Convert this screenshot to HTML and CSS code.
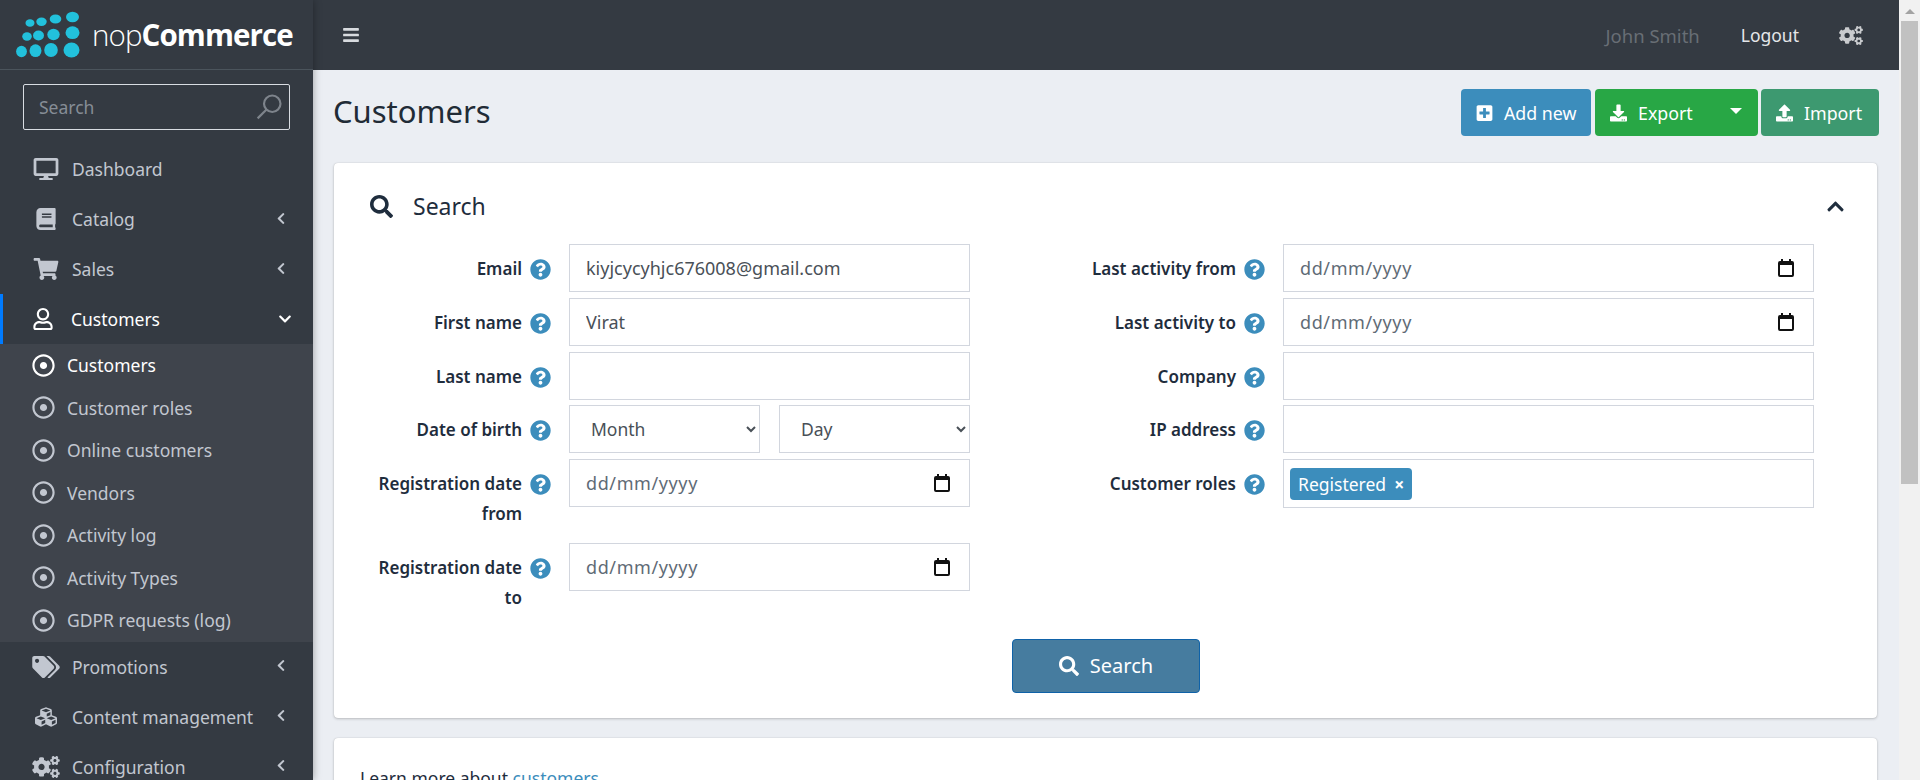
FILE: index.html
```html
<!DOCTYPE html>
<html lang="en">
<head>
	<title>Customers / nopCommerce administration</title>
	<meta charset="utf-8">
	<link rel="stylesheet" href="styles.css">
</head>
<body>
<svg class="sprites" xmlns="http://www.w3.org/2000/svg">
	<symbol id="i-search" viewBox="0 0 512 512"><path d="M505 442.7L405.3 343c-4.5-4.5-10.6-7-17-7H372c27.6-35.3 44-79.7 44-128C416 93.1 322.9 0 208 0S0 93.1 0 208s93.1 208 208 208c48.3 0 92.7-16.4 128-44v16.3c0 6.4 2.5 12.5 7 17l99.7 99.7c9.4 9.4 24.6 9.4 33.9 0l28.3-28.3c9.4-9.4 9.4-24.6.1-34zM208 336c-70.7 0-128-57.2-128-128 0-70.7 57.2-128 128-128 70.7 0 128 57.2 128 128 0 70.7-57.2 128-128 128z"/></symbol>
	<symbol id="i-bars" viewBox="0 0 448 512"><path d="M16 132h416c8.837 0 16-7.163 16-16V76c0-8.837-7.163-16-16-16H16C7.163 60 0 67.163 0 76v40c0 8.837 7.163 16 16 16zm0 160h416c8.837 0 16-7.163 16-16v-40c0-8.837-7.163-16-16-16H16c-8.837 0-16 7.163-16 16v40c0 8.837 7.163 16 16 16zm0 160h416c8.837 0 16-7.163 16-16v-40c0-8.837-7.163-16-16-16H16c-8.837 0-16 7.163-16 16v40c0 8.837 7.163 16 16 16z"/></symbol>
	<symbol id="i-help" viewBox="0 0 512 512"><path d="M504 256c0 136.997-111.043 248-248 248S8 392.997 8 256C8 119.083 119.043 8 256 8s248 111.083 248 248zM262.655 90c-54.497 0-89.255 22.957-116.549 63.758-3.536 5.286-2.353 12.415 2.715 16.258l34.699 26.31c5.205 3.947 12.621 3.008 16.665-2.122 17.864-22.658 30.113-35.797 57.303-35.797 20.429 0 45.698 13.148 45.698 32.958 0 14.976-12.363 22.667-32.534 33.976C247.128 238.528 216 254.941 216 296v4c0 6.627 5.373 12 12 12h56c6.627 0 12-5.373 12-12v-1.333c0-28.462 83.186-29.647 83.186-106.667 0-58.002-60.165-102-116.531-102zM256 338c-25.365 0-46 20.635-46 46 0 25.364 20.635 46 46 46s46-20.636 46-46c0-25.365-20.635-46-46-46z"/></symbol>
	<symbol id="i-left" viewBox="0 0 320 512"><path d="M34.52 239.03L228.87 44.69c9.37-9.37 24.57-9.37 33.94 0l22.67 22.67c9.36 9.36 9.37 24.52.04 33.9L131.49 256l154.02 154.75c9.34 9.38 9.32 24.54-.04 33.9l-22.67 22.67c-9.37 9.37-24.57 9.37-33.94 0L34.52 272.97c-9.37-9.37-9.37-24.57 0-33.94z"/></symbol>
	<symbol id="i-down" viewBox="0 0 448 512"><path d="M207.029 381.476L12.686 187.132c-9.373-9.373-9.373-24.569 0-33.941l22.667-22.667c9.357-9.357 24.522-9.375 33.901-.04L224 284.505l154.745-154.021c9.379-9.335 24.544-9.317 33.901.04l22.667 22.667c9.373 9.373 9.373 24.569 0 33.941L240.971 381.476c-9.373 9.372-24.569 9.372-33.942 0z"/></symbol>
	<symbol id="i-up" viewBox="0 0 448 512"><path d="M240.971 130.524l194.343 194.343c9.373 9.373 9.373 24.569 0 33.941l-22.667 22.667c-9.357 9.357-24.522 9.375-33.901.04L224 227.495 69.255 381.516c-9.379 9.335-24.544 9.317-33.901-.04l-22.667-22.667c-9.373-9.373-9.373-24.569 0-33.941L207.03 130.525c9.372-9.373 24.568-9.373 33.941-.001z"/></symbol>
	<symbol id="i-desktop" viewBox="0 0 576 512"><path d="M528 0H48C21.5 0 0 21.5 0 48v320c0 26.5 21.5 48 48 48h192l-16 48h-72c-13.3 0-24 10.7-24 24s10.7 24 24 24h272c13.3 0 24-10.7 24-24s-10.7-24-24-24h-72l-16-48h192c26.5 0 48-21.5 48-48V48c0-26.5-21.5-48-48-48zm-16 352H64V64h448v288z"/></symbol>
	<symbol id="i-book" viewBox="0 0 448 512"><path d="M448 360V24c0-13.3-10.7-24-24-24H96C43 0 0 43 0 96v320c0 53 43 96 96 96h328c13.3 0 24-10.7 24-24v-16c0-7.5-3.5-14.3-8.9-18.7-4.2-15.4-4.2-59.3 0-74.7 5.4-4.3 8.9-11.1 8.9-18.6zM128 134c0-3.3 2.7-6 6-6h212c3.3 0 6 2.7 6 6v20c0 3.3-2.7 6-6 6H134c-3.3 0-6-2.7-6-6v-20zm0 64c0-3.3 2.7-6 6-6h212c3.3 0 6 2.7 6 6v20c0 3.3-2.7 6-6 6H134c-3.3 0-6-2.7-6-6v-20zm253.4 250H96c-17.7 0-32-14.3-32-32 0-17.6 14.4-32 32-32h285.4c-1.9 17.1-1.9 46.9 0 64z"/></symbol>
	<symbol id="i-cart" viewBox="0 0 576 512"><path d="M528.12 301.319l47.273-208C578.806 78.301 567.391 64 551.99 64H159.208l-9.166-44.81C147.758 8.021 137.93 0 126.529 0H24C10.745 0 0 10.745 0 24v16c0 13.255 10.745 24 24 24h69.883l70.248 343.435C147.325 417.1 136 435.222 136 456c0 30.928 25.072 56 56 56s56-25.072 56-56c0-15.674-6.447-29.835-16.824-40h209.647C430.447 426.165 424 440.326 424 456c0 30.928 25.072 56 56 56s56-25.072 56-56c0-22.172-12.888-41.332-31.579-50.405l5.517-24.276c3.413-15.018-8.002-29.319-23.403-29.319H218.117l-6.545-32h293.145c11.206 0 20.92-7.754 23.403-18.681z"/></symbol>
	<symbol id="i-user" viewBox="0 0 448 512"><path d="M313.6 304c-28.7 0-42.5 16-89.6 16-47.1 0-60.8-16-89.6-16C60.2 304 0 364.2 0 438.4V464c0 26.5 21.5 48 48 48h352c26.5 0 48-21.5 48-48v-25.6c0-74.2-60.2-134.4-134.4-134.4zM400 464H48v-25.6c0-47.6 38.8-86.4 86.4-86.4 14.6 0 38.3 16 89.6 16 51.7 0 74.9-16 89.6-16 47.6 0 86.4 38.8 86.4 86.4V464zM224 288c79.5 0 144-64.5 144-144S303.5 0 224 0 80 64.5 80 144s64.5 144 144 144zm0-240c52.9 0 96 43.1 96 96s-43.1 96-96 96-96-43.1-96-96 43.1-96 96-96z"/></symbol>
	<symbol id="i-dot" viewBox="0 0 512 512"><path d="M256 56c110.532 0 200 89.451 200 200 0 110.532-89.451 200-200 200-110.532 0-200-89.451-200-200 0-110.532 89.451-200 200-200m0-48C119.033 8 8 119.033 8 256s111.033 248 248 248 248-111.033 248-248S392.967 8 256 8zm0 168c-44.183 0-80 35.817-80 80s35.817 80 80 80 80-35.817 80-80-35.817-80-80-80z"/></symbol>
	<symbol id="i-tags" viewBox="0 0 640 512"><path d="M497.941 225.941L286.059 14.059A48 48 0 0 0 252.118 0H48C21.49 0 0 21.49 0 48v204.118a48 48 0 0 0 14.059 33.941l211.882 211.882c18.744 18.745 49.136 18.746 67.882 0l204.118-204.118c18.745-18.745 18.745-49.137 0-67.882zM112 160c-26.51 0-48-21.49-48-48s21.49-48 48-48 48 21.49 48 48-21.49 48-48 48zm513.941 133.823L421.823 497.941c-18.745 18.745-49.137 18.745-67.882 0l-.36-.36L527.64 323.522c16.999-16.999 26.36-39.6 26.36-63.64s-9.362-46.641-26.36-63.64L331.397 0h48.721a48 48 0 0 1 33.941 14.059l211.882 211.882c18.745 18.745 18.745 49.137 0 67.882z"/></symbol>
	<symbol id="i-cubes" viewBox="0 0 512 512"><path d="M488.6 250.2L392 214V105.5c0-15-9.3-28.4-23.4-33.7l-100-37.5c-8.1-3.1-17.1-3.1-25.3 0l-100 37.5c-14.1 5.3-23.4 18.7-23.4 33.7V214l-96.6 36.2C9.3 255.5 0 268.9 0 283.9V394c0 13.6 7.7 26.1 19.9 32.2l100 50c10.1 5.1 22.1 5.1 32.2 0l103.9-52 103.9 52c10.1 5.1 22.1 5.1 32.2 0l100-50c12.2-6.1 19.9-18.6 19.9-32.2V283.9c0-15-9.3-28.4-23.4-33.7zM358 214.8l-85 31.9v-68.2l85-37v73.3zM154 104.1l102-38.2 102 38.2v.6l-102 41.4-102-41.4v-.6zm84 291.1l-85 42.5v-79.1l85-38.8v75.4zm0-112l-102 41.4-102-41.4v-.6l102-38.2 102 38.2v.6zm240 112l-85 42.5v-79.1l85-38.8v75.4zm0-112l-102 41.4-102-41.4v-.6l102-38.2 102 38.2v.6z"/></symbol>
	<symbol id="i-cogs" viewBox="0 0 640 512"><path d="M512.1 191l-8.2 14.3c-3 5.3-9.4 7.5-15.1 5.4-11.8-4.4-22.6-10.7-32.1-18.6-4.6-3.8-5.8-10.5-2.8-15.7l8.2-14.3c-6.9-8-12.3-17.3-15.9-27.4h-16.5c-6 0-11.2-4.3-12.2-10.3-2-12-2.1-24.6 0-37.1 1-6 6.2-10.4 12.2-10.4h16.5c3.6-10.1 9-19.4 15.9-27.4l-8.2-14.3c-3-5.2-1.9-11.9 2.8-15.7 9.5-7.9 20.4-14.2 32.1-18.6 5.7-2.1 12.1.1 15.1 5.4l8.2 14.3c10.5-1.9 21.2-1.9 31.7 0L552 6.3c3-5.3 9.4-7.5 15.1-5.4 11.8 4.4 22.6 10.7 32.1 18.6 4.6 3.8 5.8 10.5 2.8 15.7l-8.2 14.3c6.9 8 12.3 17.3 15.9 27.4h16.5c6 0 11.2 4.3 12.2 10.3 2 12 2.1 24.6 0 37.1-1 6-6.2 10.4-12.2 10.4h-16.5c-3.6 10.1-9 19.4-15.9 27.4l8.2 14.3c3 5.2 1.9 11.9-2.8 15.7-9.5 7.9-20.4 14.2-32.1 18.6-5.7 2.1-12.1-.1-15.1-5.4l-8.2-14.3c-10.4 1.9-21.2 1.9-31.7 0zm-10.5-58.8c38.5 29.6 82.4-14.3 52.8-52.8-38.5-29.7-82.4 14.3-52.8 52.8zM386.3 286.1l33.7 16.8c10.1 5.8 14.5 18.1 10.5 29.1-8.9 24.2-26.4 46.4-42.6 65.8-7.4 8.9-20.2 11.1-30.3 5.3l-29.1-16.8c-16 13.7-34.6 24.6-54.9 31.7v33.6c0 11.6-8.3 21.6-19.7 23.6-24.6 4.2-50.4 4.4-75.9 0-11.5-2-20-11.9-20-23.6V418c-20.3-7.2-38.9-18-54.9-31.7L74 403c-10 5.8-22.9 3.6-30.3-5.3-16.2-19.4-33.3-41.6-42.2-65.7-4-10.9.4-23.2 10.5-29.1l33.3-16.8c-3.9-20.9-3.9-42.4 0-63.4L12 205.8c-10.1-5.8-14.6-18.1-10.5-29 8.9-24.2 26-46.4 42.2-65.8 7.4-8.9 20.2-11.1 30.3-5.3l29.1 16.8c16-13.7 34.6-24.6 54.9-31.7V57.1c0-11.5 8.2-21.5 19.6-23.5 24.6-4.2 50.5-4.4 76-.1 11.5 2 20 11.9 20 23.6v33.6c20.3 7.2 38.9 18 54.9 31.7l29.1-16.8c10-5.8 22.9-3.6 30.3 5.3 16.2 19.4 33.2 41.6 42.1 65.8 4 10.9.1 23.2-10 29.1l-33.7 16.8c3.9 21 3.9 42.5 0 63.5zm-117.6 21.1c59.2-77-28.7-164.9-105.7-105.7-59.2 77 28.7 164.9 105.7 105.7zm243.4 182.7l-8.2 14.3c-3 5.3-9.4 7.5-15.1 5.4-11.8-4.4-22.6-10.7-32.1-18.6-4.6-3.8-5.8-10.5-2.8-15.7l8.2-14.3c-6.9-8-12.3-17.3-15.9-27.4h-16.5c-6 0-11.2-4.3-12.2-10.3-2-12-2.1-24.6 0-37.1 1-6 6.2-10.4 12.2-10.4h16.5c3.6-10.1 9-19.4 15.9-27.4l-8.2-14.3c-3-5.2-1.9-11.9 2.8-15.7 9.5-7.9 20.4-14.2 32.1-18.6 5.7-2.1 12.1.1 15.1 5.4l8.2 14.3c10.5-1.9 21.2-1.9 31.7 0l8.2-14.3c3-5.3 9.4-7.5 15.1-5.4 11.8 4.4 22.6 10.7 32.1 18.6 4.6 3.8 5.8 10.5 2.8 15.7l-8.2 14.3c6.9 8 12.3 17.3 15.9 27.4h16.5c6 0 11.2 4.3 12.2 10.3 2 12 2.1 24.6 0 37.1-1 6-6.2 10.4-12.2 10.4h-16.5c-3.6 10.1-9 19.4-15.9 27.4l8.2 14.3c3 5.2 1.9 11.9-2.8 15.7-9.5 7.9-20.4 14.2-32.1 18.6-5.7 2.1-12.1-.1-15.1-5.4l-8.2-14.3c-10.4 1.9-21.2 1.9-31.7 0zM501.6 431c38.5 29.6 82.4-14.3 52.8-52.8-38.5-29.6-82.4 14.3-52.8 52.8z"/></symbol>
	<symbol id="i-plus" viewBox="0 0 448 512"><path d="M400 32H48C21.5 32 0 53.5 0 80v352c0 26.5 21.5 48 48 48h352c26.5 0 48-21.5 48-48V80c0-26.5-21.5-48-48-48zm-32 252c0 6.6-5.4 12-12 12h-92v92c0 6.6-5.4 12-12 12h-56c-6.6 0-12-5.4-12-12v-92H92c-6.6 0-12-5.4-12-12v-56c0-6.6 5.4-12 12-12h92v-92c0-6.6 5.4-12 12-12h56c6.6 0 12 5.4 12 12v92h92c6.6 0 12 5.4 12 12v56z"/></symbol>
	<symbol id="i-download" viewBox="0 0 512 512"><path d="M216 0h80c13.3 0 24 10.7 24 24v168h87.7c17.8 0 26.7 21.5 14.1 34.1L269.7 378.3c-7.5 7.5-19.8 7.5-27.3 0L90.1 226.1c-12.6-12.6-3.7-34.1 14.1-34.1H192V24c0-13.3 10.7-24 24-24zm296 376v112c0 13.3-10.7 24-24 24H24c-13.3 0-24-10.7-24-24V376c0-13.3 10.7-24 24-24h146.7l49 49c20.1 20.1 52.5 20.1 72.6 0l49-49H488c13.3 0 24 10.7 24 24zm-124 88c0-11-9-20-20-20s-20 9-20 20 9 20 20 20 20-9 20-20zm64 0c0-11-9-20-20-20s-20 9-20 20 9 20 20 20 20-9 20-20z"/></symbol>
	<symbol id="i-upload" viewBox="0 0 512 512"><path d="M296 384h-80c-13.3 0-24-10.7-24-24V192h-87.7c-17.8 0-26.7-21.5-14.1-34.1L242.3 5.7c7.5-7.5 19.8-7.5 27.3 0l152.2 152.2c12.6 12.6 3.7 34.1-14.1 34.1H320v168c0 13.3-10.7 24-24 24zm216-8v112c0 13.3-10.7 24-24 24H24c-13.3 0-24-10.7-24-24V376c0-13.3 10.7-24 24-24h136v8c0 30.9 25.1 56 56 56h80c30.9 0 56-25.1 56-56v-8h136c13.3 0 24 10.7 24 24zm-124 88c0-11-9-20-20-20s-20 9-20 20 9 20 20 20 20-9 20-20zm64 0c0-11-9-20-20-20s-20 9-20 20 9 20 20 20 20-9 20-20z"/></symbol>
	<symbol id="i-cal" viewBox="0 0 16 18"><path d="M3 0h2v2h6V0h2v2h1a2 2 0 0 1 2 2v12a2 2 0 0 1-2 2H2a2 2 0 0 1-2-2V4a2 2 0 0 1 2-2h1zM2 6v10h12V6z"/></symbol>
</svg>

<div class="page">
	<aside class="sidebar">
		<a class="brand" href="#">
			<svg class="brand-dots" viewBox="0 0 66 48" xmlns="http://www.w3.org/2000/svg">
				<g transform="translate(-16 -12)">
					<ellipse cx="30" cy="24" rx="4.5" ry="3.8"/><ellipse cx="41.5" cy="22.7" rx="5.2" ry="4.2"/><ellipse cx="55.5" cy="20" rx="5.8" ry="4.6"/><ellipse cx="72.5" cy="18" rx="6.5" ry="5.2"/>
					<ellipse cx="27" cy="37.5" rx="4.8" ry="4.2"/><ellipse cx="38.5" cy="36.5" rx="5.5" ry="5"/><ellipse cx="53.5" cy="35.5" rx="6.2" ry="5.8"/><ellipse cx="72.5" cy="33.7" rx="7" ry="6.4"/>
					<ellipse cx="21.5" cy="52.5" rx="5.4" ry="5.8"/><ellipse cx="35.5" cy="51.7" rx="6" ry="6.4"/><ellipse cx="51" cy="51" rx="6.8" ry="7"/><ellipse cx="71.5" cy="51" rx="8" ry="7.6"/>
				</g>
			</svg>
			<span class="brand-name"><span class="brand-light">nop</span><b>Commerce</b></span>
		</a>
		<div class="side-search">
			<span class="side-search-text">Search</span>
			<svg class="side-search-icon" viewBox="0 0 24 24" xmlns="http://www.w3.org/2000/svg"><circle cx="15" cy="9" r="7.6"/><path d="M9.5 14.5L1.5 22.5"/></svg>
		</div>
		<nav>
			<a class="nav-item" href="#"><svg class="nav-icon"><use href="#i-desktop"/></svg><span>Dashboard</span></a>
			<a class="nav-item" href="#"><svg class="nav-icon"><use href="#i-book"/></svg><span>Catalog</span><svg class="nav-arrow"><use href="#i-left"/></svg></a>
			<a class="nav-item" href="#"><svg class="nav-icon"><use href="#i-cart"/></svg><span>Sales</span><svg class="nav-arrow"><use href="#i-left"/></svg></a>
			<a class="nav-item nav-open" href="#"><svg class="nav-icon"><use href="#i-user"/></svg><span>Customers</span><svg class="nav-arrow"><use href="#i-down"/></svg></a>
			<div class="subnav">
				<a class="sub-item sub-active" href="#"><svg class="sub-icon"><use href="#i-dot"/></svg>Customers</a>
				<a class="sub-item" href="#"><svg class="sub-icon"><use href="#i-dot"/></svg>Customer roles</a>
				<a class="sub-item" href="#"><svg class="sub-icon"><use href="#i-dot"/></svg>Online customers</a>
				<a class="sub-item" href="#"><svg class="sub-icon"><use href="#i-dot"/></svg>Vendors</a>
				<a class="sub-item" href="#"><svg class="sub-icon"><use href="#i-dot"/></svg>Activity log</a>
				<a class="sub-item" href="#"><svg class="sub-icon"><use href="#i-dot"/></svg>Activity Types</a>
				<a class="sub-item" href="#"><svg class="sub-icon"><use href="#i-dot"/></svg>GDPR requests (log)</a>
			</div>
			<a class="nav-item" href="#"><svg class="nav-icon"><use href="#i-tags"/></svg><span>Promotions</span><svg class="nav-arrow"><use href="#i-left"/></svg></a>
			<a class="nav-item" href="#"><svg class="nav-icon"><use href="#i-cubes"/></svg><span>Content management</span><svg class="nav-arrow"><use href="#i-left"/></svg></a>
			<a class="nav-item" href="#"><svg class="nav-icon"><use href="#i-cogs"/></svg><span>Configuration</span><svg class="nav-arrow"><use href="#i-left"/></svg></a>
		</nav>
	</aside>

	<div class="main">
		<header class="topbar">
			<svg class="topbar-bars"><use href="#i-bars"/></svg>
			<span class="topbar-user">John Smith</span>
			<a class="topbar-logout" href="#">Logout</a>
			<svg class="topbar-cogs"><use href="#i-cogs"/></svg>
		</header>

		<div class="content">
			<div class="title-row">
				<h1>Customers</h1>
				<div class="actions">
					<a class="btn btn-add" href="#"><svg class="btn-icon"><use href="#i-plus"/></svg>Add new</a>
					<a class="btn btn-export" href="#"><svg class="btn-icon"><use href="#i-download"/></svg>Export<span class="caret"></span></a>
					<a class="btn btn-import" href="#"><svg class="btn-icon"><use href="#i-upload"/></svg>Import</a>
				</div>
			</div>

			<section class="card">
				<div class="card-head">
					<svg class="card-head-icon"><use href="#i-search"/></svg>
					<span class="card-head-title">Search</span>
					<svg class="card-head-toggle"><use href="#i-up"/></svg>
				</div>
				<form class="filters">
					<div class="col col-left">
						<div class="row"><div class="lbl"><label>Email</label><svg class="help"><use href="#i-help"/></svg></div><input class="field" type="text" value="kiyjcycyhjc676008@gmail.com"></div>
						<div class="row"><div class="lbl"><label>First name</label><svg class="help"><use href="#i-help"/></svg></div><input class="field" type="text" value="Virat"></div>
						<div class="row"><div class="lbl"><label>Last name</label><svg class="help"><use href="#i-help"/></svg></div><input class="field" type="text"></div>
						<div class="row"><div class="lbl"><label>Date of birth</label><svg class="help"><use href="#i-help"/></svg></div>
							<div class="dob">
								<select class="field"><option>Month</option></select>
								<select class="field"><option>Day</option></select>
							</div>
						</div>
						<div class="row"><div class="lbl"><label>Registration date from</label><svg class="help"><use href="#i-help"/></svg></div><div class="field date">dd/mm/yyyy<svg class="cal"><use href="#i-cal"/></svg></div></div>
						<div class="row"><div class="lbl"><label>Registration date to</label><svg class="help"><use href="#i-help"/></svg></div><div class="field date">dd/mm/yyyy<svg class="cal"><use href="#i-cal"/></svg></div></div>
					</div>
					<div class="col col-right">
						<div class="row"><div class="lbl"><label>Last activity from</label><svg class="help"><use href="#i-help"/></svg></div><div class="field date">dd/mm/yyyy<svg class="cal"><use href="#i-cal"/></svg></div></div>
						<div class="row"><div class="lbl"><label>Last activity to</label><svg class="help"><use href="#i-help"/></svg></div><div class="field date">dd/mm/yyyy<svg class="cal"><use href="#i-cal"/></svg></div></div>
						<div class="row"><div class="lbl"><label>Company</label><svg class="help"><use href="#i-help"/></svg></div><input class="field" type="text"></div>
						<div class="row"><div class="lbl"><label>IP address</label><svg class="help"><use href="#i-help"/></svg></div><input class="field" type="text"></div>
						<div class="row"><div class="lbl"><label>Customer roles</label><svg class="help"><use href="#i-help"/></svg></div><div class="field tags"><span class="tag">Registered<b class="tag-x">×</b></span></div></div>
					</div>
				</form>
				<div class="search-row">
					<a class="btn-search" href="#"><svg class="btn-icon"><use href="#i-search"/></svg>Search</a>
				</div>
			</section>

			<section class="card card-info">
				<p>Learn more about <a href="#">customers</a></p>
			</section>
		</div>
	</div>

	<div class="scrollbar">
		<span class="scroll-arrow"></span>
		<div class="scroll-thumb"></div>
	</div>
</div>
</body>
</html>
```

FILE: styles.css
```css
html, body { margin: 0; height: 100%; overflow: hidden; }
body { font-family: "Noto Sans", "Open Sans", sans-serif; font-size: 17.5px; color: #1f2d3d; background-color: #ebeef3; }
a { text-decoration: none; color: inherit; }
.sprites { display: none; }
svg { fill: currentColor; flex-shrink: 0; }

.page { display: flex; height: 780px; overflow: hidden; }

/* sidebar */
.sidebar { width: 313px; flex-shrink: 0; background-color: #343a42; color: #c2c7d0; box-shadow: 0 0 8px rgba(0,0,0,.35); position: relative; z-index: 2; }
.brand { display: flex; align-items: center; height: 70px; box-sizing: border-box; border-bottom: 1px solid #4b545c; padding-left: 16px; color: #fff; }
.brand-dots { width: 66px; height: 48px; fill: #22c1dc; margin-right: 10px; }
.brand-name { font-family: "Open Sans", sans-serif; font-size: 29.5px; letter-spacing: -.9px; }
.brand-light { font-weight: 300; }
.brand-name b { font-weight: 700; }

.side-search { display: flex; align-items: center; justify-content: space-between; height: 46px; box-sizing: border-box; margin: 14px 23px 14px; border: 1px solid #d8dce2; border-radius: 2px; padding: 0 7px 0 15px; color: #868d96; }
.side-search-icon { width: 26px; height: 26px; fill: none; stroke: #7e848c; stroke-width: 2; }

.nav-item { display: flex; align-items: center; height: 50px; padding-left: 32px; box-sizing: border-box; white-space: nowrap; }
.nav-icon { width: 28px; height: 22px; margin-right: 12px; }
.nav-arrow { width: 10px; height: 13px; margin-left: auto; margin-right: 27px; margin-bottom: 2px; }
.nav-open { color: #fff; border-left: 3px solid #007bff; padding-left: 29px; }
.nav-open .nav-icon { margin-left: -3px; margin-right: 14px; }
.nav-open .nav-arrow { width: 14px; height: 14px; margin-right: 21px; margin-bottom: 0; }

.subnav { background-color: #3f444c; }
.sub-item { display: flex; align-items: center; height: 42.5px; padding-left: 32px; }
.sub-icon { width: 23px; height: 23px; margin-right: 12px; }
.sub-active { color: #fff; }

/* top bar */
.main { flex: 1; min-width: 0; display: flex; flex-direction: column; }
.topbar { display: flex; align-items: center; height: 70px; flex-shrink: 0; background-color: #343a42; color: #d8dbdf; padding-left: 30px; }
.topbar-bars { width: 16px; height: 18px; }
.topbar-user { margin-left: auto; color: #686e75; font-size: 18.5px; }
.topbar-logout { margin-left: 41px; color: #e4e6e9; }
.topbar-cogs { width: 24px; height: 19px; margin-left: 40px; margin-right: 36px; color: #c9cbce; }

/* page content */
.content { padding: 19px 22px 0 20px; }
.title-row { display: flex; align-items: center; justify-content: space-between; height: 47px; margin-right: -2px; margin-bottom: 27px; }
h1 { margin: 0 0 3px; font-size: 31px; font-weight: 400; line-height: 44px; color: #212b36; }
.actions { display: flex; gap: 4px; }
.btn { display: flex; align-items: center; height: 47px; box-sizing: border-box; padding: 0 15px; border-radius: 4px; color: #fff; font-size: 17.8px; white-space: nowrap; }
.btn-icon { width: 17px; height: 18px; margin-right: 11px; }
.btn-add { width: 130px; background-color: #3c8dbc; }
.btn-export { width: 163px; background-color: #28a745; }
.btn-import { width: 118px; background-color: #3d9970; margin-left: -1px; }
.caret { border-top: 6px solid #fff; border-left: 6px solid transparent; border-right: 6px solid transparent; margin-left: auto; margin-bottom: 4px; margin-right: 1px; }

.card { background-color: #fff; border-radius: 4px; box-shadow: 0 0 1px rgba(0,0,0,.2), 0 1px 3px rgba(0,0,0,.2); margin-left: 1px; }
.card-head { display: flex; align-items: center; height: 81px; box-sizing: border-box; padding: 5px 33px 0 36px; }
.card-head-icon { width: 23px; height: 23px; color: #1f2d3d; margin-right: 20px; }
.card-head-title { font-size: 23px; }
.card-head-toggle { width: 17px; height: 19px; margin-left: auto; color: #1f2d3d; }

.filters { display: flex; padding-left: 18px; }
.col { display: flex; flex-direction: column; gap: 5.8px; }
.col-left { width: 618px; }
.col-right { width: 748px; margin-left: 96px; }
.row { display: flex; align-items: flex-start; }
.lbl { display: flex; justify-content: flex-end; align-items: flex-start; width: 217px; box-sizing: border-box; flex-shrink: 0; padding: 10px 18px 8px 0; }
.lbl label { font-weight: 600; font-size: 17px; text-align: right; line-height: 30px; max-width: 158px; color: #1f2d3d; }
.help { width: 21px; height: 21px; color: #3c8dbc; margin-left: 8px; margin-top: 5px; }

.field { flex: 1; min-width: 0; height: 48px; box-sizing: border-box; border: 1px solid #d2d6de; background-color: #fff; color: #495057; font-family: inherit; font-size: 18px; padding: 0 16px; border-radius: 0; outline: none; }
.dob { flex: 1; display: flex; gap: 19px; }
.dob .field { width: 0; padding: 0 0 0 17px; font-size: 17.5px; }
.date { display: flex; align-items: center; justify-content: space-between; color: #5f6b76; padding-right: 19px; letter-spacing: .6px; }
.cal { width: 16px; height: 18px; color: #111; }
.tags { display: flex; align-items: center; height: 49px; padding: 0 6px; }
.tag { display: flex; align-items: center; height: 32px; padding: 0 8px; border-radius: 4px; background-color: #3c8dbc; color: #fff; font-size: 17.5px; }
.tag-x { margin-left: 8px; }

.search-row { display: flex; justify-content: center; margin-top: 18px; padding: 0 0 25px 1px; }
.btn-search { display: flex; align-items: center; justify-content: center; width: 188px; height: 54px; box-sizing: border-box; background-color: #467c9f; border: 1px solid #0f62a8; border-radius: 4px; color: #fff; font-size: 20px; }
.btn-search .btn-icon { width: 20px; height: 20px; }

.card-info { margin-top: 20px; padding: 28px 26px; height: 90px; box-sizing: border-box; }
.card-info p { margin: 0; line-height: 24px; }
.card-info a { color: #3c8dbc; }

/* the window's scrollbar */
.scrollbar { width: 21px; flex-shrink: 0; background-color: #f1f1f1; padding-left: 2px; padding-right: 2px; box-sizing: border-box; }
.scroll-arrow { display: block; width: 0; margin: 9px auto 7px; border-bottom: 5px solid #a3a3a3; border-left: 5px solid transparent; border-right: 5px solid transparent; }
.scroll-thumb { height: 463px; background-color: #c1c1c1; }
```
